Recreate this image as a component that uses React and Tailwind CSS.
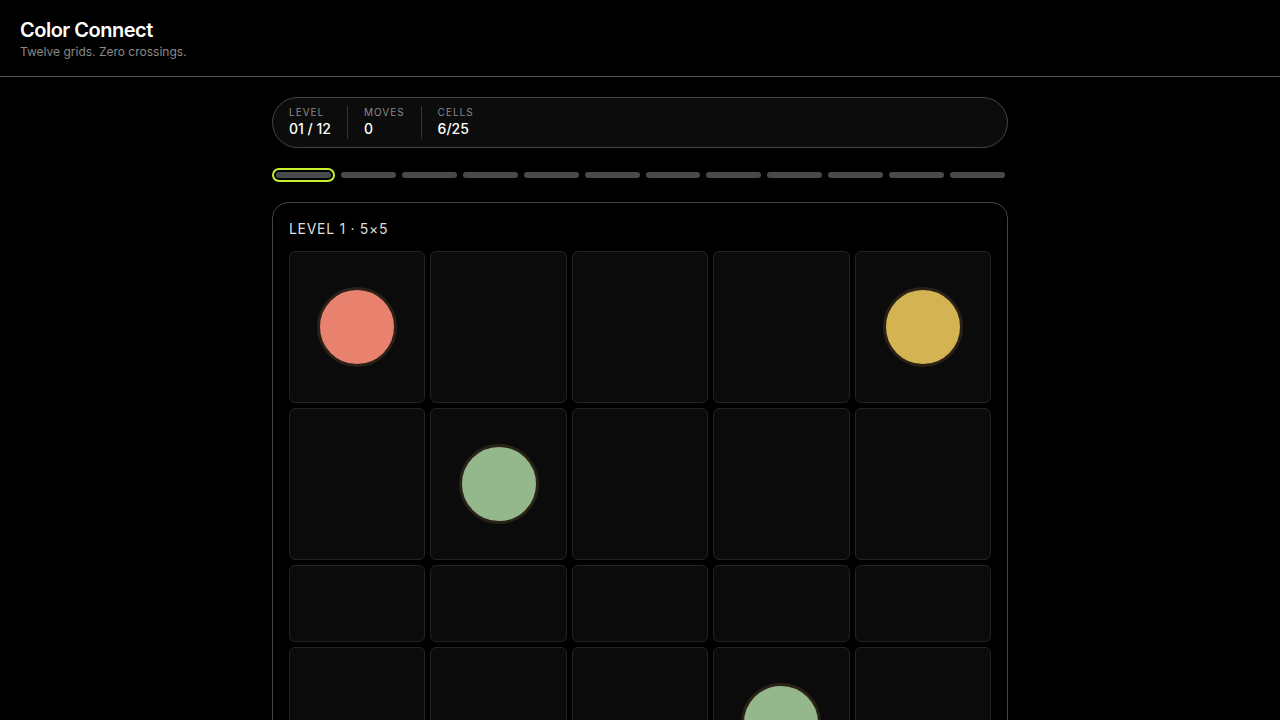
const dots = {
  "0-0": "bg-[#e8826f]",
  "0-4": "bg-[#d4b352]",
  "1-1": "bg-[#94b78b]",
  "3-3": "bg-[#94b78b]",
};
const rowH = ["h-[152px]", "h-[152px]", "h-[77px]", "h-[152px]", "h-[152px]"];

export default function App() {
  return (
    <div className="min-h-screen bg-black text-white" style={{ fontFamily: "Inter, sans-serif" }}>
      <header className="h-[77px] border-b border-[#555] px-5 pt-[18px]">
        <h1 className="text-[20px] font-semibold leading-6 tracking-tight">Color Connect</h1>
        <p className="text-xs text-[#8a8a8a] mt-[2px]">Twelve grids. Zero crossings.</p>
      </header>
      <main className="w-[736px] mx-auto pt-5">
        <div className="h-[51px] rounded-full border border-[#444] bg-[#0c0c0c] flex items-center px-4">
          {[["LEVEL", "01 / 12"], ["MOVES", "0"], ["CELLS", "6/25"]].map(([l, v], i) => (
            <div key={l} className={`flex flex-col ${i > 0 ? "border-l border-[#333] pl-4" : ""} pr-4`}>
              <span className="text-[10px] tracking-widest text-[#888] leading-3">{l}</span>
              <span className="text-sm font-medium leading-5 mt-px">{v}</span>
            </div>
          ))}
        </div>
        <div className="flex gap-[6px] mt-5 pr-[3px]">
          {Array.from({ length: 12 }).map((_, i) => (
            <div key={i} className={`flex-1 h-[14px] flex items-center ${i === 0 ? "rounded-full border-2 border-[#c9f02c] px-[2px]" : ""}`}>
              <div className="h-[6px] w-full rounded-full bg-[#4a4a4a]" />
            </div>
          ))}
        </div>
        <div className="mt-5 rounded-2xl border border-[#444] bg-black px-4 pt-4 pb-4">
          <div className="text-sm tracking-wider text-[#ddd] mb-[12px]">LEVEL 1 · 5×5</div>
          <div className="flex flex-col gap-[5px]">
            {rowH.map((h, r) => (
              <div key={r} className="grid grid-cols-5 gap-[5px]">
                {[0, 1, 2, 3, 4].map((c) => (
                  <div key={c} className={`${h} rounded-md border border-[#232323] bg-[#0b0b0b] flex items-center justify-center`}>
                    {dots[`${r}-${c}`] && (
                      <div className={`w-[80px] h-[80px] rounded-full border-[3px] border-[#2a2218] ${dots[`${r}-${c}`]}`} />
                    )}
                  </div>
                ))}
              </div>
            ))}
          </div>
        </div>
      </main>
    </div>
  );
}
